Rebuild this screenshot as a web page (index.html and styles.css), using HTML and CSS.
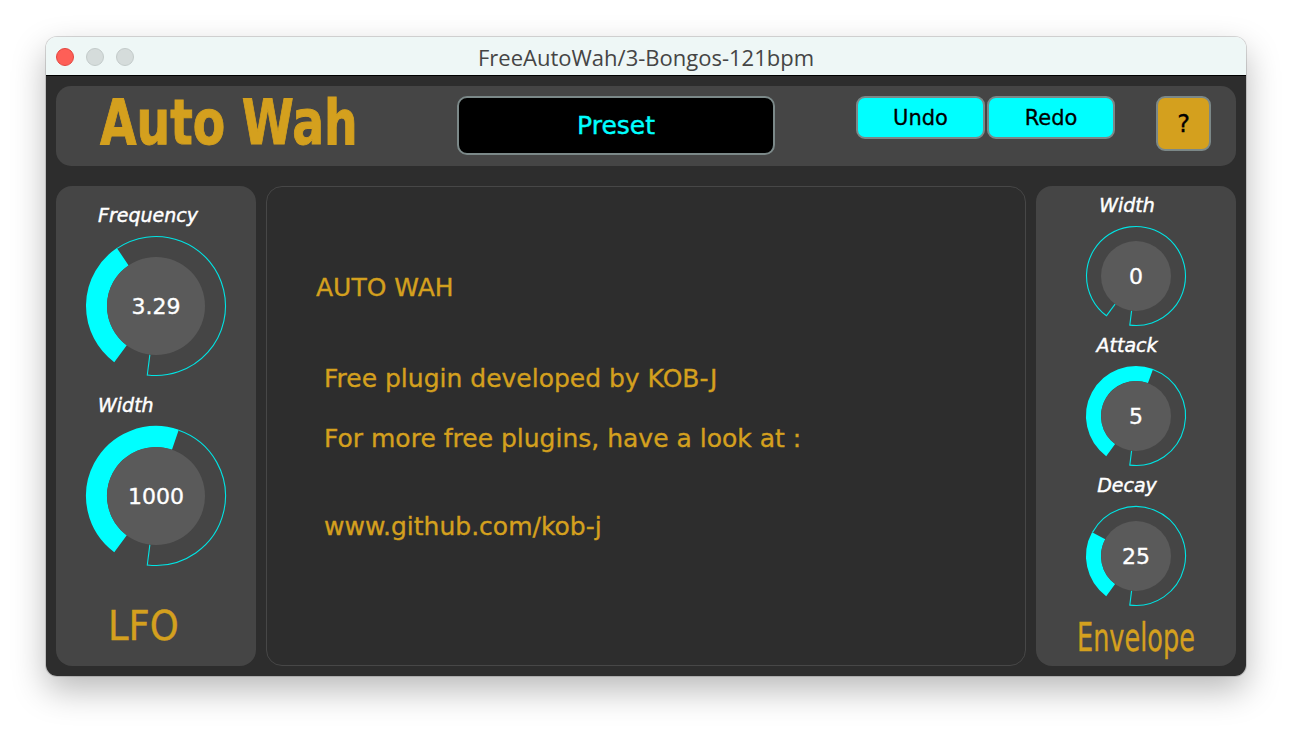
FILE: index.html
```html
<!DOCTYPE html>
<html lang="en">
<head>
<meta charset="utf-8">
<title>FreeAutoWah</title>
<link rel="stylesheet" href="styles.css">
</head>
<body>
<div class="window">
  <div class="titlebar">
    <div class="lights">
      <span class="light red"></span>
      <span class="light"></span>
      <span class="light"></span>
    </div>
    <div class="title">FreeAutoWah/3-Bongos-121bpm</div>
    <div></div>
  </div>
  <div class="plugin">
    <header class="topbar">
      <div class="brand"><span class="brand-text">Auto Wah</span></div>
      <div class="preset">Preset</div>
      <div class="history">
        <button class="btn undo">Undo</button>
        <button class="btn redo">Redo</button>
      </div>
      <button class="help">?</button>
    </header>
    <div class="main">
      <section class="panel lfo">
        <div class="label lfo-label first">Frequency</div>
        <svg class="knob big" viewBox="0 0 140 140" width="140" height="140">
          <path class="band" d="M34.53 117.77 A59.5 59.5 0 0 1 36.73 20.67"/>
          <path class="line" d="M31.14 12.38 A69.5 69.5 0 1 1 61.29 138.95"/>
          <path class="line" d="M63.86 118.61 L61.23 139.45"/>
          <circle class="cap" cx="70" cy="70" r="49"/>
          <text class="val" x="70" y="78">3.29</text>
        </svg>
        <div class="label lfo-label">Width</div>
        <svg class="knob big" viewBox="0 0 140 140" width="140" height="140">
          <path class="band" d="M34.53 117.77 A59.5 59.5 0 0 1 89.37 13.74"/>
          <path class="line" d="M92.63 4.29 A69.5 69.5 0 0 1 61.29 138.95"/>
          <path class="line" d="M63.86 118.61 L61.23 139.45"/>
          <circle class="cap" cx="70" cy="70" r="49"/>
          <text class="val" x="70" y="78">1000</text>
        </svg>
        <div class="section-title lfo-title"><span>LFO</span></div>
      </section>

      <section class="about">
        <p class="about-head">AUTO WAH</p>
        <p class="about-line dev">Free plugin developed by KOB-J</p>
        <p class="about-line more">For more free plugins, have a look at :</p>
        <p class="about-line link">www.github.com/kob-j</p>
      </section>

      <section class="panel env">
        <div class="label env-label first">Width</div>
        <svg class="knob small" viewBox="0 0 100 100" width="100" height="100">
          <path class="line" d="M20.49 89.74 A49.5 49.5 0 1 1 43.80 99.11"/>
          <path class="line" d="M29.13 78.10 L20.19 90.14"/>
          <path class="line" d="M45.61 84.72 L43.73 99.61"/>
          <circle class="cap" cx="50" cy="50" r="35"/>
          <text class="val" x="50" y="58">0</text>
        </svg>
        <div class="label env-label">Attack</div>
        <svg class="knob small" viewBox="0 0 100 100" width="100" height="100">
          <path class="band-s" d="M24.66 84.12 A42.5 42.5 0 0 1 64.54 10.06"/>
          <path class="line" d="M66.93 3.48 A49.5 49.5 0 0 1 43.80 99.11"/>
          <path class="line" d="M45.61 84.72 L43.73 99.61"/>
          <circle class="cap" cx="50" cy="50" r="35"/>
          <text class="val" x="50" y="58">5</text>
        </svg>
        <div class="label env-label">Decay</div>
        <svg class="knob small" viewBox="0 0 100 100" width="100" height="100">
          <path class="band-s" d="M24.66 84.12 A42.5 42.5 0 0 1 12.65 29.72"/>
          <path class="line" d="M6.50 26.38 A49.5 49.5 0 1 1 43.80 99.11"/>
          <path class="line" d="M45.61 84.72 L43.73 99.61"/>
          <circle class="cap" cx="50" cy="50" r="35"/>
          <text class="val" x="50" y="58">25</text>
        </svg>
        <div class="section-title env-title"><span>Envelope</span></div>
      </section>
    </div>
  </div>
</div>
</body>
</html>
```

FILE: styles.css
```css
* {
  box-sizing: border-box;
}

html, body {
  margin: 0;
  padding: 0;
  background: #ffffff;
}

body {
  font-family: "DejaVu Sans", "Liberation Sans", sans-serif;
  min-height: 730px;
  padding: 37px 0 0 46px;
}

.window {
  width: 1200px;
  border-radius: 11px;
  overflow: hidden;
  box-shadow: 0 0 0 1px rgba(0, 0, 0, 0.14), 0 14px 34px rgba(0, 0, 0, 0.28);
}

.titlebar {
  height: 39px;
  background: #eef7f6;
  border-bottom: 1px solid #000;
  display: grid;
  grid-template-columns: 1fr auto 1fr;
  align-items: center;
}

.lights {
  display: flex;
  gap: 12px;
  padding-left: 10px;
  padding-top: 1px;
}

.light {
  width: 18px;
  height: 18px;
  border-radius: 50%;
  background: #d5dcdb;
  border: 1px solid #c2cac9;
}

.light.red {
  background: #fe5f57;
  border-color: #e2463f;
}

.title {
  font-family: "Open Sans", "Liberation Sans", sans-serif;
  font-size: 22px;
  color: #454545;
  padding-top: 1px;
}

.plugin {
  height: 600px;
  background: #2d2d2d;
  padding: 10px;
  display: flex;
  flex-direction: column;
  gap: 20px;
}

.topbar {
  height: 80px;
  flex: none;
  background: #454545;
  border-radius: 15px;
  display: flex;
  align-items: flex-start;
  padding: 0 25px 0 44px;
}

.brand {
  width: 357px;
  flex: none;
  height: 74px;
  line-height: 74px;
  white-space: nowrap;
}

.brand-text {
  display: inline-block;
  font-size: 63px;
  font-weight: bold;
  color: #d4a01e;
  -webkit-text-stroke: 1px #d4a01e;
  transform: scaleX(0.75);
  transform-origin: left center;
}

.preset {
  margin-top: 10px;
  width: 318px;
  height: 59px;
  flex: none;
  background: #000;
  border: 2px solid #7b8888;
  border-radius: 10px;
  display: flex;
  align-items: center;
  justify-content: center;
  color: #00ffff;
  font-size: 25px;
  -webkit-text-stroke: 0.4px #00ffff;
}

.history {
  margin-top: 10px;
  margin-left: 81px;
  display: flex;
  gap: 2px;
}

.btn,
.help {
  font-family: "DejaVu Sans", sans-serif;
  color: #000;
  border: 2px solid #7b8888;
  border-radius: 9px;
  padding: 0;
  display: flex;
  align-items: center;
  justify-content: center;
  -webkit-text-stroke: 0.3px #000;
}

.btn {
  background: #00ffff;
  height: 43px;
  font-size: 21px;
}

.undo {
  width: 129px;
}

.redo {
  width: 128px;
}

.help {
  margin-top: 10px;
  margin-left: 41px;
  width: 55px;
  height: 55px;
  background: #d4a01e;
  font-size: 24px;
}

.main {
  flex: 1;
  display: flex;
  gap: 10px;
}

.panel {
  width: 200px;
  flex: none;
  background: #454545;
  border-radius: 16px;
  display: flex;
  flex-direction: column;
  align-items: center;
}

.label {
  align-self: stretch;
  height: 22px;
  line-height: 22px;
  font-size: 19px;
  font-style: italic;
  color: #fff;
  -webkit-text-stroke: 0.45px #fff;
  white-space: nowrap;
}

.lfo-label {
  padding-left: 42px;
  margin-top: 18px;
}

.env-label {
  text-align: center;
  padding-right: 18px;
  margin-top: 8px;
}

.knob {
  display: block;
  overflow: visible;
  margin-top: 10px;
  flex: none;
}

.knob .band {
  fill: none;
  stroke: #00ffff;
  stroke-width: 21;
}

.knob .band-s {
  fill: none;
  stroke: #00ffff;
  stroke-width: 15;
}

.knob .line {
  fill: none;
  stroke: #00e4e4;
  stroke-width: 1.1;
}

.knob .cap {
  fill: #5a5a5a;
}

.knob .val {
  font-family: "DejaVu Sans", sans-serif;
  font-size: 22px;
  fill: #ffffff;
  stroke: #ffffff;
  stroke-width: 0.35;
  text-anchor: middle;
}

.section-title {
  align-self: stretch;
  color: #d4a01e;
  white-space: nowrap;
  -webkit-text-stroke: 0.4px #d4a01e;
}

.section-title span {
  display: inline-block;
}

.lfo-title {
  margin-top: 36px;
  padding-left: 52px;
  font-size: 41px;
  line-height: 48px;
}

.lfo-title span {
  transform: scaleX(0.9);
  transform-origin: left center;
}

.env-title {
  margin-top: 10px;
  font-size: 39px;
  line-height: 44px;
  text-align: center;
}

.env-title span {
  transform: scaleX(0.655);
  transform-origin: center center;
}

.about {
  flex: 1;
  background: #2d2d2d;
  border: 1.5px solid #474747;
  border-radius: 16px;
  padding: 86px 0 0 49px;
  color: #d4a01e;
  font-size: 25px;
  line-height: 30px;
  -webkit-text-stroke: 0.35px #d4a01e;
}

.about p {
  margin: 0;
  white-space: nowrap;
}

.about-line {
  padding-left: 8px;
}

.dev {
  margin-top: 61px !important;
}

.more {
  margin-top: 30px !important;
}

.link {
  margin-top: 58px !important;
}
```
